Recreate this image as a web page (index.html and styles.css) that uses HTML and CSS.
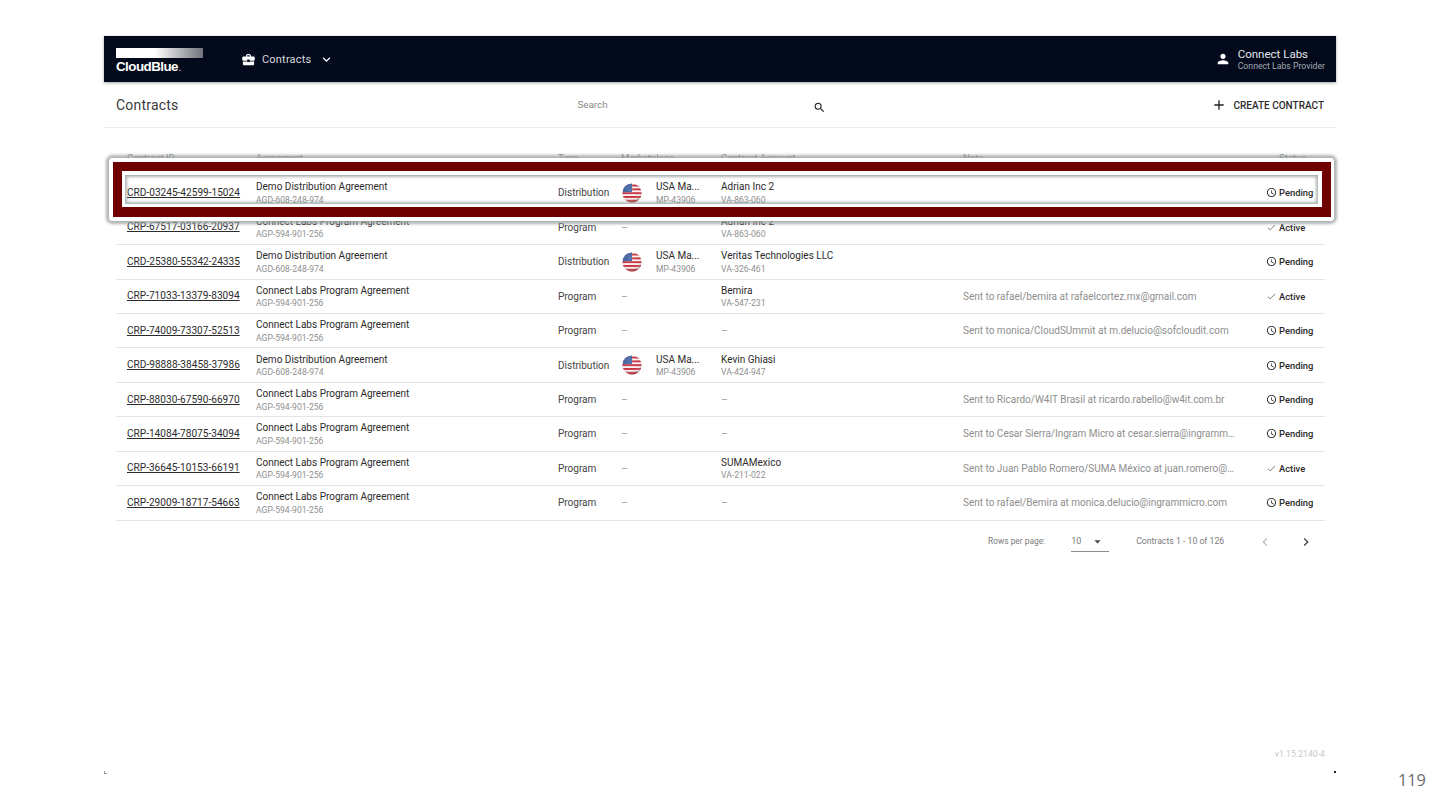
FILE: index.html
```html
<!DOCTYPE html>
<html lang="en">
<head>
<meta charset="utf-8">
<title>Contracts</title>
<link rel="stylesheet" href="styles.css">
</head>
<body>
<div class="slide">
  <div class="app">
    <header class="topbar">
      <div class="logo">
        <div class="logo-bar"></div>
        <div class="logo-text">CloudBlue<span class="logo-dot">.</span></div>
      </div>
      <div class="module">
        <svg class="ic-case" viewBox="0 0 24 24"><path d="M10 16v-1H3l-.01 4c0 1.11.89 2 2 2h14c1.11 0 2-.89 2-2v-4h-7v1h-4zm10-9h-4V5l-2-2h-4L8 5v2H4c-1.1 0-2 .9-2 2v3c0 1.11.89 2 2 2h6v-2h4v2h6c1.1 0 2-.9 2-2V9c0-1.1-.9-2-2-2zm-6 0h-4V5h4v2z"/></svg>
        <span class="module-name">Contracts</span>
        <svg class="ic-chev" viewBox="0 0 24 24"><path d="M7.41 8.59 12 13.17l4.59-4.58L18 10l-6 6-6-6z"/></svg>
      </div>
      <div class="account">
        <svg class="ic-user" viewBox="0 0 24 24"><path d="M12 12c2.21 0 4-1.79 4-4s-1.79-4-4-4-4 1.79-4 4 1.79 4 4 4zm0 2c-2.67 0-8 1.34-8 4v2h16v-2c0-2.66-5.33-4-8-4z"/></svg>
        <div class="account-text">
          <div class="account-name">Connect Labs</div>
          <div class="account-role">Connect Labs Provider</div>
        </div>
      </div>
    </header>

    <div class="toolbar">
      <h1 class="title">Contracts</h1>
      <div class="search">
        <span class="search-label">Search</span>
        <svg class="ic-search" viewBox="0 0 24 24"><path d="M15.5 14h-.79l-.28-.27A6.47 6.47 0 0 0 16 9.5 6.5 6.5 0 1 0 9.5 16c1.61 0 3.09-.59 4.23-1.57l.27.28v.79l5 4.99L20.49 19l-4.99-5zm-6 0C7.01 14 5 11.99 5 9.5S7.01 5 9.5 5 14 7.01 14 9.5 11.99 14 9.5 14z"/></svg>
      </div>
      <div class="create">
        <svg class="ic-plus" viewBox="0 0 24 24"><path d="M19 13h-6v6h-2v-6H5v-2h6V5h2v6h6v2z"/></svg>
        <span>CREATE CONTRACT</span>
      </div>
    </div>

    <div class="table">
      <div class="row head">
        <div class="cell first">Contract ID</div>
        <div class="cell">Agreement</div>
        <div class="cell">Type</div>
        <div class="cell">Marketplace</div>
        <div class="cell">Contract Account</div>
        <div class="cell">Note</div>
        <div class="cell status-head">Status</div>
      </div>

      <div class="row">
        <div class="cell first"><a class="cid">CRD-03245-42599-15024</a></div>
        <div class="cell"><div class="main">Demo Distribution Agreement</div><div class="sub">AGD-608-248-974</div></div>
        <div class="cell type">Distribution</div>
        <div class="cell mp"><svg class="flag" viewBox="0 0 20 20"><use href="#us-flag"/></svg><div class="mp-text"><div class="main">USA Ma...</div><div class="sub">MP-43906</div></div></div>
        <div class="cell"><div class="main">Adrian Inc 2</div><div class="sub">VA-863-060</div></div>
        <div class="cell note"></div>
        <div class="cell status"><svg class="ic-clock" viewBox="0 0 24 24"><use href="#clock"/></svg>Pending</div>
      </div>

      <div class="row">
        <div class="cell first"><a class="cid">CRP-67517-03166-20937</a></div>
        <div class="cell"><div class="main">Connect Labs Program Agreement</div><div class="sub">AGP-594-901-256</div></div>
        <div class="cell type">Program</div>
        <div class="cell dash">–</div>
        <div class="cell"><div class="main">Adrian Inc 2</div><div class="sub">VA-863-060</div></div>
        <div class="cell note"></div>
        <div class="cell status active"><svg class="ic-check" viewBox="0 0 24 24"><use href="#check"/></svg>Active</div>
      </div>

      <div class="row">
        <div class="cell first"><a class="cid">CRD-25380-55342-24335</a></div>
        <div class="cell"><div class="main">Demo Distribution Agreement</div><div class="sub">AGD-608-248-974</div></div>
        <div class="cell type">Distribution</div>
        <div class="cell mp"><svg class="flag" viewBox="0 0 20 20"><use href="#us-flag"/></svg><div class="mp-text"><div class="main">USA Ma...</div><div class="sub">MP-43906</div></div></div>
        <div class="cell"><div class="main">Veritas Technologies LLC</div><div class="sub">VA-326-461</div></div>
        <div class="cell note"></div>
        <div class="cell status"><svg class="ic-clock" viewBox="0 0 24 24"><use href="#clock"/></svg>Pending</div>
      </div>

      <div class="row">
        <div class="cell first"><a class="cid">CRP-71033-13379-83094</a></div>
        <div class="cell"><div class="main">Connect Labs Program Agreement</div><div class="sub">AGP-594-901-256</div></div>
        <div class="cell type">Program</div>
        <div class="cell dash">–</div>
        <div class="cell"><div class="main">Bemira</div><div class="sub">VA-547-231</div></div>
        <div class="cell note">Sent to rafael/bemira at rafaelcortez.mx@gmail.com</div>
        <div class="cell status active"><svg class="ic-check" viewBox="0 0 24 24"><use href="#check"/></svg>Active</div>
      </div>

      <div class="row">
        <div class="cell first"><a class="cid">CRP-74009-73307-52513</a></div>
        <div class="cell"><div class="main">Connect Labs Program Agreement</div><div class="sub">AGP-594-901-256</div></div>
        <div class="cell type">Program</div>
        <div class="cell dash">–</div>
        <div class="cell dash">–</div>
        <div class="cell note">Sent to monica/CloudSUmmit at m.delucio@sofcloudit.com</div>
        <div class="cell status"><svg class="ic-clock" viewBox="0 0 24 24"><use href="#clock"/></svg>Pending</div>
      </div>

      <div class="row">
        <div class="cell first"><a class="cid">CRD-98888-38458-37986</a></div>
        <div class="cell"><div class="main">Demo Distribution Agreement</div><div class="sub">AGD-608-248-974</div></div>
        <div class="cell type">Distribution</div>
        <div class="cell mp"><svg class="flag" viewBox="0 0 20 20"><use href="#us-flag"/></svg><div class="mp-text"><div class="main">USA Ma...</div><div class="sub">MP-43906</div></div></div>
        <div class="cell"><div class="main">Kevin Ghiasi</div><div class="sub">VA-424-947</div></div>
        <div class="cell note"></div>
        <div class="cell status"><svg class="ic-clock" viewBox="0 0 24 24"><use href="#clock"/></svg>Pending</div>
      </div>

      <div class="row">
        <div class="cell first"><a class="cid">CRP-88030-67590-66970</a></div>
        <div class="cell"><div class="main">Connect Labs Program Agreement</div><div class="sub">AGP-594-901-256</div></div>
        <div class="cell type">Program</div>
        <div class="cell dash">–</div>
        <div class="cell dash">–</div>
        <div class="cell note">Sent to Ricardo/W4IT Brasil at ricardo.rabello@w4it.com.br</div>
        <div class="cell status"><svg class="ic-clock" viewBox="0 0 24 24"><use href="#clock"/></svg>Pending</div>
      </div>

      <div class="row">
        <div class="cell first"><a class="cid">CRP-14084-78075-34094</a></div>
        <div class="cell"><div class="main">Connect Labs Program Agreement</div><div class="sub">AGP-594-901-256</div></div>
        <div class="cell type">Program</div>
        <div class="cell dash">–</div>
        <div class="cell dash">–</div>
        <div class="cell note">Sent to Cesar Sierra/Ingram Micro at cesar.sierra@ingrammicro.com</div>
        <div class="cell status"><svg class="ic-clock" viewBox="0 0 24 24"><use href="#clock"/></svg>Pending</div>
      </div>

      <div class="row">
        <div class="cell first"><a class="cid">CRP-36645-10153-66191</a></div>
        <div class="cell"><div class="main">Connect Labs Program Agreement</div><div class="sub">AGP-594-901-256</div></div>
        <div class="cell type">Program</div>
        <div class="cell dash">–</div>
        <div class="cell"><div class="main">SUMAMexico</div><div class="sub">VA-211-022</div></div>
        <div class="cell note">Sent to Juan Pablo Romero/SUMA México at juan.romero@suma.mx</div>
        <div class="cell status active"><svg class="ic-check" viewBox="0 0 24 24"><use href="#check"/></svg>Active</div>
      </div>

      <div class="row">
        <div class="cell first"><a class="cid">CRP-29009-18717-54663</a></div>
        <div class="cell"><div class="main">Connect Labs Program Agreement</div><div class="sub">AGP-594-901-256</div></div>
        <div class="cell type">Program</div>
        <div class="cell dash">–</div>
        <div class="cell dash">–</div>
        <div class="cell note">Sent to rafael/Bemira at monica.delucio@ingrammicro.com</div>
        <div class="cell status"><svg class="ic-clock" viewBox="0 0 24 24"><use href="#clock"/></svg>Pending</div>
      </div>
    </div>

    <div class="pager">
      <span class="rows-label">Rows per page:</span>
      <div class="rows-select"><span>10</span><svg class="ic-drop" viewBox="0 0 24 24"><path d="M7 10l5 5 5-5z"/></svg></div>
      <span class="range">Contracts 1 - 10 of 126</span>
      <svg class="ic-page off" viewBox="0 0 24 24"><path d="M15.41 7.41 14 6l-6 6 6 6 1.41-1.41L10.83 12z"/></svg>
      <svg class="ic-page" viewBox="0 0 24 24"><path d="M10 6 8.59 7.41 13.17 12l-4.58 4.58L10 18l6-6z"/></svg>
    </div>

    <div class="focus">
      <div class="focus-red">
        <div class="focus-hole"></div>
      </div>
    </div>

    <div class="version">v1.15.2140-4</div>
    <i class="tick tick-l"></i>
    <i class="tick tick-r"></i>
  </div>
  <div class="page-no">119</div>
</div>

<svg class="defs" width="0" height="0">
  <defs>
    <clipPath id="flag-clip"><circle cx="10" cy="10" r="9.6"/></clipPath>
    <radialGradient id="flag-shade" cx=".42" cy=".3" r=".75">
      <stop offset="0" stop-color="#fff" stop-opacity=".15"/>
      <stop offset=".6" stop-color="#fff" stop-opacity="0"/>
      <stop offset="1" stop-color="#3a0a10" stop-opacity=".6"/>
    </radialGradient>
    <g id="us-flag">
      <g clip-path="url(#flag-clip)">
        <rect width="20" height="20" fill="#f6efef"/>
        <rect y="1.6" width="20" height="1.9" fill="#c92f3e"/>
        <rect y="5.4" width="20" height="1.9" fill="#c92f3e"/>
        <rect y="9.2" width="20" height="1.9" fill="#c92f3e"/>
        <rect y="13" width="20" height="1.9" fill="#c92f3e"/>
        <rect y="16.8" width="20" height="3.2" fill="#c92f3e"/>
        <rect width="10" height="9.2" fill="#3d5f9f"/>
        <rect width="20" height="20" fill="url(#flag-shade)"/>
      </g>
    </g>
    <g id="clock">
      <path d="M11.99 2C6.47 2 2 6.48 2 12s4.47 10 9.99 10C17.52 22 22 17.52 22 12S17.52 2 11.99 2zM12 20c-4.42 0-8-3.58-8-8s3.58-8 8-8 8 3.58 8 8-3.58 8-8 8z"/>
      <path d="M12.5 7H11v6l5.25 3.15.75-1.23-4.5-2.67z"/>
    </g>
    <g id="check">
      <path d="M9 16.2 4.8 12l-1 1L9 18.2 20.2 7l-1-1z"/>
    </g>
  </defs>
</svg>
</body>
</html>
```

FILE: styles.css
```css
* { box-sizing: border-box; }

html, body {
  margin: 0;
  padding: 0;
  background: #fff;
}

body {
  font-family: Roboto, "Liberation Sans", sans-serif;
  color: #212121;
  width: 1440px;
  height: 810px;
  overflow: hidden;
}

.slide {
  position: relative;
  width: 1440px;
  height: 810px;
  padding: 36px 104px 0;
}

.app {
  position: relative;
  width: 1232px;
  height: 738px;
}

/* top bar */
.topbar {
  display: flex;
  align-items: center;
  height: 46px;
  padding: 0 11px 0 12px;
  background: #020a1c;
  box-shadow: 0 1px 3px rgba(0, 0, 0, .35);
  color: #fff;
}

.logo { width: 87px; margin-top: 4px; }

.logo-bar {
  height: 10px;
  background: linear-gradient(90deg, #fff 0, #fff 45%, #6f7278 100%);
}

.logo-text {
  font-family: "Liberation Sans", Arial, sans-serif;
  font-size: 13.4px;
  font-weight: 700;
  line-height: 14px;
  letter-spacing: -.55px;
  margin-top: 2px;
}

.logo-dot { font-weight: 400; color: #9aa0a8; }

.module {
  display: flex;
  align-items: center;
  margin-left: 38px;
}

.ic-case { width: 15px; height: 15px; fill: #fff; }

.module-name {
  font-size: 11px;
  letter-spacing: .2px;
  color: #d7dade;
  margin-left: 6px;
}

.ic-chev { width: 15px; height: 15px; fill: #fff; margin-left: 8px; }

.account {
  display: flex;
  align-items: center;
  margin-left: auto;
}

.ic-user { width: 16px; height: 16px; fill: #fff; margin-right: 7px; }

.account-text { margin-top: 2px; }

.account-name { font-size: 11.5px; line-height: 13px; color: #e4e6e9; }

.account-role { font-size: 8.7px; line-height: 11px; color: #a5a9b1; }

/* toolbar */
.toolbar {
  position: relative;
  display: flex;
  align-items: center;
  height: 46px;
  padding: 0 12px;
  border-bottom: 1px solid #ececec;
}

.title {
  margin: 0;
  font-size: 14px;
  font-weight: 400;
  color: #3a3a3a;
  letter-spacing: .2px;
}

.search {
  position: relative;
  width: 248px;
  height: 30px;
  margin-left: 399px;
}

.search-label {
  position: absolute;
  left: 0;
  top: 9px;
  font-size: 9.8px;
  color: #8a8a8a;
}

.ic-search {
  position: absolute;
  left: 236px;
  top: 11px;
  width: 13px;
  height: 13px;
  fill: #222;
}

.create {
  display: flex;
  align-items: center;
  margin-left: auto;
  margin-top: 1px;
  font-size: 10px;
  font-weight: 500;
  color: #2c2c2c;
}

.ic-plus { width: 16px; height: 16px; fill: #222; margin-right: 6px; }

/* table */
.table { padding: 0 11px 0 12px; }

.row {
  display: grid;
  grid-template-columns: 140px 302px 63px 100px 242px 303px 59px;
  align-items: center;
  height: 34.44px;
  border-bottom: 1px solid #e4e4e4;
}

.head {
  height: 48.2px;
  padding-top: 11px;
  font-size: 9.6px;
  color: #8d8d8d;
}

.cell { min-width: 0; }

.first { padding-left: 11px; }

.status-head { padding-left: 13px; }

.cid {
  display: block;
  font-size: 10.1px;
  line-height: 12px;
  color: #2b2b2b;
  text-decoration: underline;
  white-space: nowrap;
}

.main {
  margin-top: 2px;
  font-size: 10px;
  line-height: 12.5px;
  color: #2b2b2b;
  white-space: nowrap;
}

.sub {
  font-size: 8.6px;
  line-height: 12.5px;
  color: #8f8f8f;
  white-space: nowrap;
}

.type { font-size: 10px; color: #444; }

.dash { font-size: 10.5px; color: #a0a0a0; }

.mp { display: flex; align-items: center; }

.flag { width: 20px; height: 20px; margin-left: 1px; margin-right: 14px; flex: none; }

.note {
  font-size: 10px;
  color: #8e8e8e;
  padding-right: 29px;
  white-space: nowrap;
  overflow: hidden;
  text-overflow: ellipsis;
}

.status {
  display: flex;
  align-items: center;
  font-size: 9.4px;
  font-weight: 500;
  color: #2b2b2b;
  white-space: nowrap;
}

.ic-clock, .ic-check {
  width: 11px;
  height: 11px;
  margin-right: 2px;
  flex: none;
  fill: #2b2b2b;
}

.ic-check { fill: #666; }

.defs { position: absolute; }

/* pagination */
.pager {
  display: flex;
  align-items: center;
  height: 41px;
  padding-left: 884px;
  font-size: 8.4px;
  color: #7c7c7c;
}

.rows-select {
  display: flex;
  align-items: center;
  width: 38px;
  height: 21px;
  margin-left: 26px;
  border-bottom: 1px solid #8c8c8c;
  font-size: 9px;
  margin-top: 1px;
}

.ic-drop { width: 15px; height: 15px; fill: #444; margin-left: 9px; }

.range { margin-left: 27px; font-size: 8.7px; }

.ic-page { width: 16px; height: 16px; fill: #444; margin-left: 25px; margin-top: 1px; }

.ic-page.off { fill: #bdbdbd; margin-left: 33px; }

/* highlight frame laid over the first row */
.focus {
  position: absolute;
  left: 5px;
  top: 122px;
  width: 1225px;
  height: 63px;
  border-style: solid;
  border-color: #fff;
  border-width: 4px 3px 4px 4px;
  border-radius: 4px;
  box-shadow: 0 0 3px 2.5px rgba(150, 155, 153, .75);
}

.focus-red {
  height: 100%;
  border: 9px solid #700000;
  border-bottom-width: 10px;
}

.focus-hole {
  height: 100%;
  border-style: solid;
  border-color: #fff;
  border-width: 4px 4px 3px 3px;
  box-shadow: inset 0 0 3px 2px rgba(150, 155, 153, .75);
}

/* footer marks */
.version {
  position: absolute;
  right: 11px;
  top: 713px;
  font-size: 8.7px;
  color: #c9c9c9;
}

.tick {
  position: absolute;
  top: 735px;
  width: 3px;
  height: 3px;
}

.tick-l { left: 0; border-left: 1px solid #9a9a9a; border-bottom: 1px solid #9a9a9a; }

.tick-r { right: 0; width: 2px; height: 2px; background: #222; }

.page-no {
  position: absolute;
  right: 14px;
  top: 770px;
  font-family: "Open Sans", sans-serif;
  font-size: 16.4px;
  line-height: 20px;
  color: #6c6c6c;
}
```
